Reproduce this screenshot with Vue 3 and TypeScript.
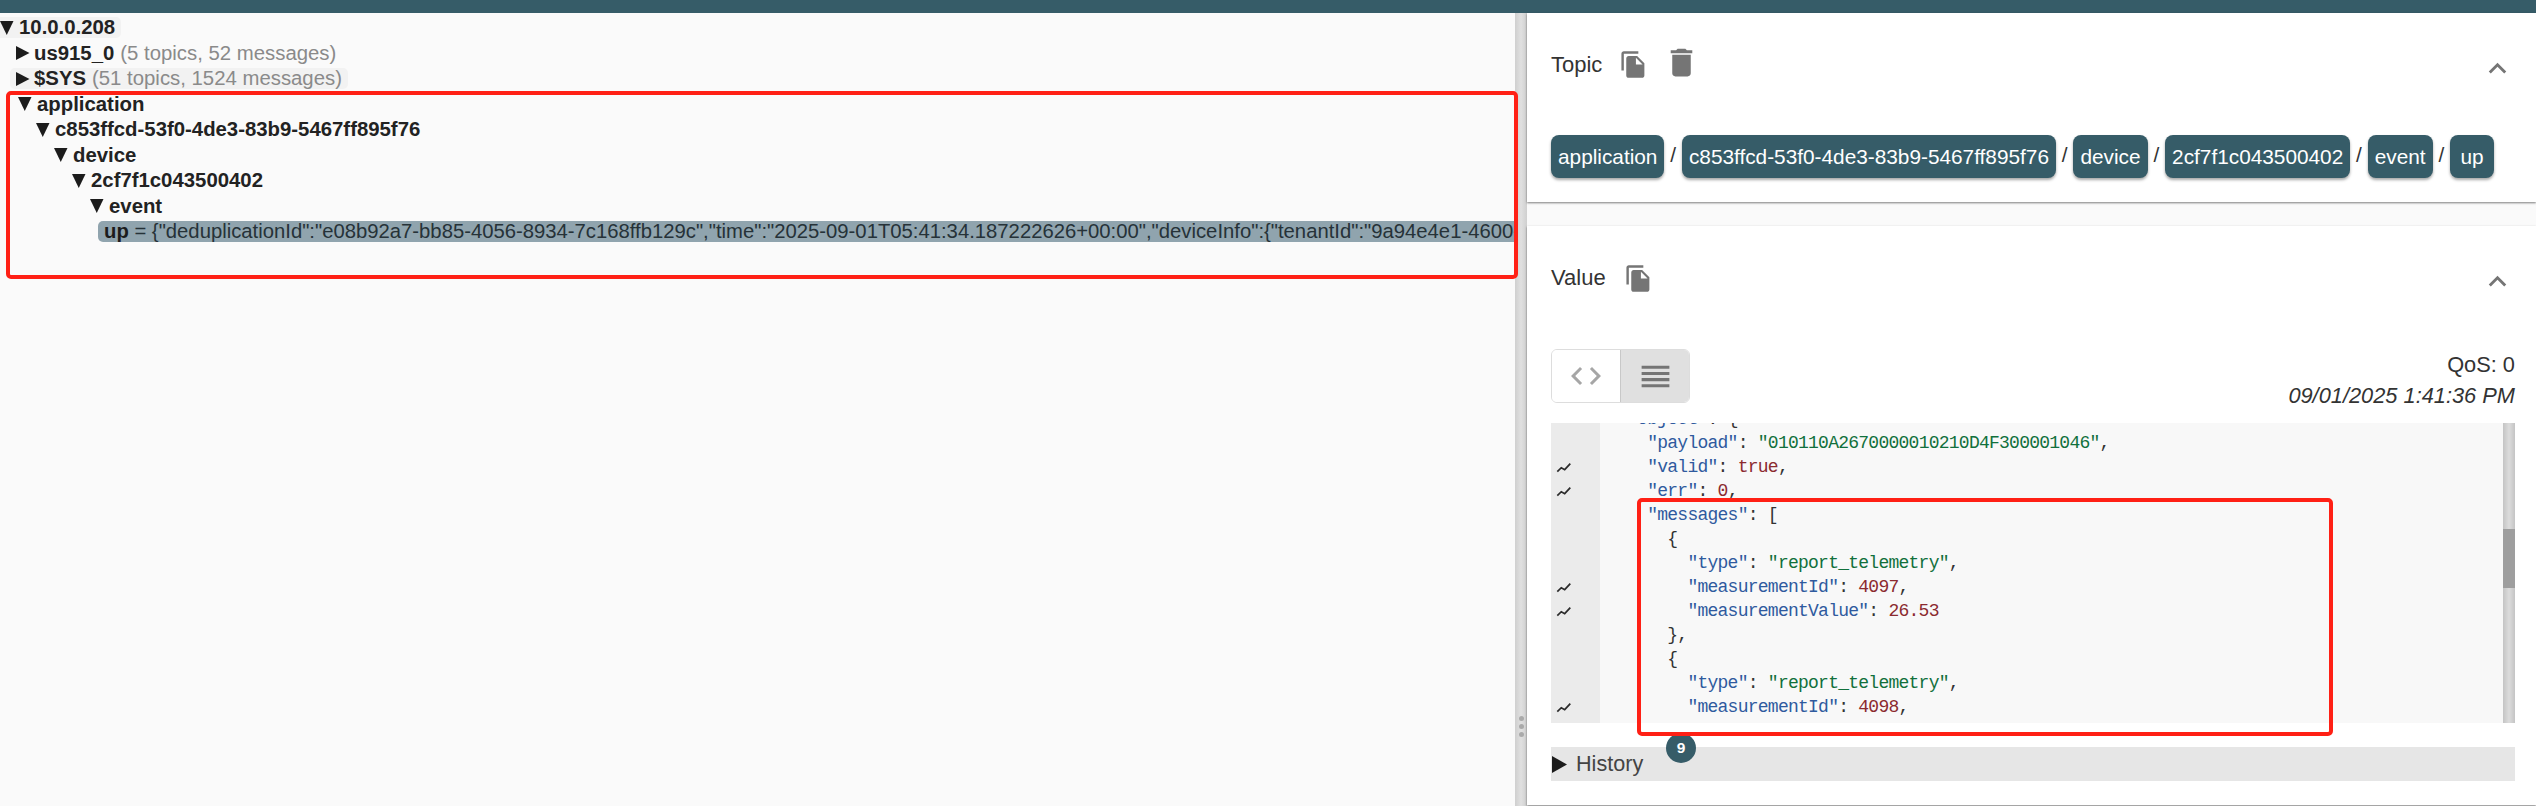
<script setup lang="ts">
type Tok = [string, string]
interface CodeLine { trend: boolean; toks: Tok[] }
interface TreeNode { name: string; stats?: string; level: number; open: boolean; hover?: boolean }

const nodes: TreeNode[] = [
  { name: '10.0.0.208', level: 0, open: true, hover: true },
  { name: 'us915_0', stats: '(5 topics, 52 messages)', level: 1, open: false },
  { name: '$SYS', stats: '(51 topics, 1524 messages)', level: 1, open: false, hover: true },
  { name: 'application', level: 1, open: true },
  { name: 'c853ffcd-53f0-4de3-83b9-5467ff895f76', level: 2, open: true },
  { name: 'device', level: 3, open: true },
  { name: '2cf7f1c043500402', level: 4, open: true },
  { name: 'event', level: 5, open: true },
]

const payload = '{"deduplicationId":"e08b92a7-bb85-4056-8934-7c168ffb129c","time":"2025-09-01T05:41:34.187222626+00:00","deviceInfo":{"tenantId":"9a94e4e1-4600-4d6f-9a3c-1f6c2b7e8a10","tenantName":"ChirpStack"}}'

const chips = ['application', 'c853ffcd-53f0-4de3-83b9-5467ff895f76', 'device', '2cf7f1c043500402', 'event', 'up']

const lines: CodeLine[] = [
  { trend: false, toks: [['k', '  "object"'], ['p', ': {']] },
  { trend: false, toks: [['k', '    "payload"'], ['p', ': '], ['s', '"010110A2670000010210D4F300001046"'], ['p', ',']] },
  { trend: true, toks: [['k', '    "valid"'], ['p', ': '], ['n', 'true'], ['p', ',']] },
  { trend: true, toks: [['k', '    "err"'], ['p', ': '], ['n', '0'], ['p', ',']] },
  { trend: false, toks: [['k', '    "messages"'], ['p', ': [']] },
  { trend: false, toks: [['p', '      {']] },
  { trend: false, toks: [['k', '        "type"'], ['p', ': '], ['s', '"report_telemetry"'], ['p', ',']] },
  { trend: true, toks: [['k', '        "measurementId"'], ['p', ': '], ['n', '4097'], ['p', ',']] },
  { trend: true, toks: [['k', '        "measurementValue"'], ['p', ': '], ['n', '26.53']] },
  { trend: false, toks: [['p', '      },']] },
  { trend: false, toks: [['p', '      {']] },
  { trend: false, toks: [['k', '        "type"'], ['p', ': '], ['s', '"report_telemetry"'], ['p', ',']] },
  { trend: true, toks: [['k', '        "measurementId"'], ['p', ': '], ['n', '4098'], ['p', ',']] },
  { trend: false, toks: [] },
]

const copyPath = 'M16 1H4c-1.1 0-2 .9-2 2v14h2V3h12V1zm-1 4 6 6v10c0 1.1-.9 2-2 2H7.99C6.89 23 6 22.1 6 21l.01-14c0-1.1.89-2 1.99-2h7zm-1 7h5.5L14 6.5V12z'
const chevronPath = 'M12 8l-6 6 1.41 1.41L12 10.83l4.59 4.58L18 14z'
</script>

<template>
  <div class="app">
    <div class="topbar"></div>
    <div class="main">
      <div class="tree">
        <div v-for="n in nodes" :key="n.name" class="row">
          <span
            class="node"
            :class="{ hover: n.hover, closed: !n.open }"
            :style="{ marginLeft: 18 * n.level - 8 + 'px' }"
          >
            <svg v-if="n.open" class="arrow" viewBox="0 0 14 14"><polygon points="0,0 13.5,0 6.75,14" /></svg>
            <svg v-else class="arrow" viewBox="0 0 14 14"><polygon points="0,0 13.5,7 0,14" /></svg>
            <b>{{ n.name }}</b>
            <span v-if="n.stats" class="stats">{{ n.stats }}</span>
          </span>
        </div>
        <div class="row">
          <div class="leaf"><b>up</b> = {{ payload }}</div>
        </div>
      </div>

      <div class="splitter">
        <i></i><i></i><i></i>
      </div>

      <div class="side">
        <section class="panel topic">
          <header class="head">
            <span class="title">Topic</span>
            <svg class="copy" viewBox="0 0 24 24"><path :d="copyPath" /></svg>
            <svg class="trash" viewBox="0 0 24 24"><path d="M6 19c0 1.1.9 2 2 2h8c1.1 0 2-.9 2-2V7H6v12zM19 4h-3.5l-1-1h-5l-1 1H5v2h14V4z" /></svg>
            <svg class="chev" viewBox="0 0 24 24"><path :d="chevronPath" /></svg>
          </header>
          <div class="chips">
            <template v-for="(c, i) in chips" :key="c">
              <span v-if="i > 0" class="slash">/</span>
              <span class="chip">{{ c }}</span>
            </template>
          </div>
        </section>

        <section class="panel value">
          <header class="head">
            <span class="title">Value</span>
            <svg class="copy copy-value" viewBox="0 0 24 24"><path :d="copyPath" /></svg>
            <svg class="chev" viewBox="0 0 24 24"><path :d="chevronPath" /></svg>
          </header>

          <div class="tools">
            <div class="toggle">
              <button class="tbtn">
                <svg class="code-ic" viewBox="0 0 24 24"><path d="M9.4 16.6L4.8 12l4.6-4.6L8 6l-6 6 6 6 1.4-1.4zm5.2 0l4.6-4.6-4.6-4.6L16 6l6 6-6 6-1.4-1.4z" /></svg>
              </button>
              <button class="tbtn on">
                <svg class="list-ic" viewBox="0 0 24 24"><path d="M3 15h18v-2H3v2zm0 4h18v-2H3v2zm0-8h18V9H3v2zm0-6v2h18V5H3z" /></svg>
              </button>
            </div>
            <div class="meta">
              <div>QoS: 0</div>
              <div class="date">09/01/2025 1:41:36 PM</div>
            </div>
          </div>

          <div class="editor">
            <div class="lines">
              <div v-for="(l, i) in lines" :key="i" class="line">
                <div class="gutter">
                  <svg v-if="l.trend" class="trend" viewBox="0 0 24 24"><path d="M6.3 16.7 10.3 12.7 13.7 14.7 19.3 8.7" /></svg>
                </div>
                <code class="src"><span v-for="(t, j) in l.toks" :key="j" :class="t[0]">{{ t[1] }}</span></code>
              </div>
            </div>
            <div class="scroll"><div class="thumb"></div></div>
          </div>

          <div class="history">
            <svg class="harrow" viewBox="0 0 15 17"><polygon points="0,0 15,8.5 0,17" /></svg>
            <span>History</span>
            <span class="badge">9</span>
          </div>
        </section>
      </div>
    </div>

    <div class="mark mark-tree"></div>
    <div class="mark mark-code"></div>
  </div>
</template>

<style>
html, body { margin: 0; overflow: hidden; }
</style>

<style scoped>
.app {
  position: relative;
  width: 2536px;
  height: 806px;
  overflow: hidden;
  display: flex;
  flex-direction: column;
  font-family: "Liberation Sans", Arial, sans-serif;
  color: #333;
  background: #fafafa;
}
.topbar { height: 13px; flex: none; background: #365c68; }
.main { flex: 1; display: flex; min-height: 0; }

.tree {
  width: 1515px;
  flex: none;
  padding-top: 2px;
  overflow: hidden;
  background: #fafafa;
  font-size: 20.35px;
  color: #222;
}
.row { height: 25.5px; display: flex; align-items: center; white-space: nowrap; }
.node {
  display: inline-flex;
  align-items: center;
  height: 21px;
  padding: 0 6px 0 8px;
  border-radius: 5px;
}
.node.hover { background: #f2f2f2; }
.arrow { width: 14px; height: 14px; flex: none; margin-right: 5px; fill: #1c1c1c; }
.node.closed { margin-right: 0; }
.node.closed .arrow { margin-left: -2px; margin-right: 4px; }
.stats { margin-left: 6px; color: #8a8a8a; }
.leaf {
  margin-left: 98px;
  flex: 1;
  min-width: 0;
  height: 21px;
  line-height: 21px;
  padding-left: 6px;
  overflow: hidden;
  background: #90a4ae;
  border-radius: 5px 0 0 5px;
  color: #263238;
  font-size: 20.28px;
}
.leaf b { color: #1c1c1c; }

.splitter {
  width: 12px;
  flex: none;
  box-sizing: border-box;
  display: flex;
  flex-direction: column;
  align-items: center;
  justify-content: flex-end;
  gap: 3px;
  padding-bottom: 69px;
  background: linear-gradient(90deg, #cfcfcf, #e0e0e0 50%, #cfcfcf);
}
.splitter i { width: 5px; height: 5px; border-radius: 50%; background: #aaa; }

.side { flex: 1; display: flex; flex-direction: column; min-width: 0; gap: 24px; background: #fafafa; }
.panel {
  background: #fff;
  padding: 0 21px 0 24px;
  box-shadow: 0 1px 2px rgba(0, 0, 0, 0.5);
}
.topic { height: 189px; flex: none; box-sizing: border-box; }
.value { height: 579px; flex: none; box-sizing: border-box; }

.head { height: 104px; display: flex; align-items: center; }
.title { font-size: 22px; color: #333; }
.head svg { flex: none; fill: #757575; }
.copy { width: 29px; height: 29px; margin-left: 16.5px; margin-top: -2px; }
.copy-value { margin-left: 18px; margin-top: 0; }
.trash { width: 37px; height: 37px; margin-left: 15px; margin-top: -6px; }
.chev { width: 35px; height: 35px; margin-left: auto; margin-top: 6px; margin-right: 0; }

.chips { display: flex; align-items: center; margin-top: 18px; font-size: 20.8px; }
.chip {
  height: 43px;
  min-width: 30px;
  line-height: 43px;
  padding: 0 7px;
  border-radius: 8px;
  background: #365c68;
  color: #fff;
  text-align: center;
  white-space: nowrap;
  box-shadow: 0 2px 3px rgba(0, 0, 0, 0.35);
}
.slash { width: 17.5px; text-align: center; color: #333; margin-top: -4px; }

.tools { height: 54px; margin-top: 19px; display: flex; justify-content: space-between; }
.toggle {
  width: 139px;
  display: flex;
  box-sizing: border-box;
  border: 1px solid #ddd;
  border-radius: 6px;
  overflow: hidden;
}
.tbtn {
  flex: 1;
  padding: 0;
  margin: 0;
  border: 0;
  background: #fff;
  display: flex;
  align-items: center;
  justify-content: center;
}
.tbtn.on { background: #e0e0e0; border-left: 1px solid #c8c8c8; }
.code-ic { width: 36px; height: 36px; fill: #a6a6a6; }
.list-ic { width: 37px; height: 37px; fill: #757575; }
.meta { text-align: right; font-size: 21.8px; line-height: 31px; color: #333; }
.date { font-style: italic; }

.editor { height: 300px; margin-top: 20px; display: flex; background: #f8f8f8; overflow: hidden; }
.lines { flex: 1; min-width: 0; margin-top: -16px; }
.line { height: 24px; display: flex; }
.gutter { width: 49px; flex: none; background: #ebebeb; }
.trend { display: block; width: 24px; height: 24px; fill: none; stroke: #2b2b2b; stroke-width: 1.7; }
.src {
  padding-left: 7px;
  font-family: "Liberation Mono", monospace;
  font-size: 18px;
  letter-spacing: -0.75px;
  line-height: 24px;
  white-space: pre;
}
.k { color: #2f5a9e; }
.s { color: #11703c; }
.n { color: #8b2a2f; }
.p { color: #333; }
.scroll {
  width: 12px;
  flex: none;
  padding-top: 106px;
  box-sizing: border-box;
  background: linear-gradient(90deg, #c4c4c4, #dcdcdc 50%, #c4c4c4);
}
.thumb { height: 59px; background: #9e9e9e; }

.history {
  position: relative;
  height: 34px;
  margin-top: 24px;
  display: flex;
  align-items: center;
  background: #e6e6e6;
  font-size: 21.6px;
  color: #444;
}
.harrow { width: 15px; height: 17px; margin: 0 9px 0 1px; fill: #1c1c1c; }
.badge {
  position: absolute;
  left: 115px;
  top: -14px;
  width: 30px;
  height: 30px;
  border-radius: 50%;
  background: #365c68;
  color: #fff;
  font-size: 15.5px;
  font-weight: bold;
  line-height: 30px;
  text-align: center;
}

.mark {
  position: absolute;
  box-sizing: border-box;
  border: 4px solid #ff2015;
  border-radius: 5px;
  pointer-events: none;
}
.mark-tree { left: 6px; top: 91px; width: 1512px; height: 188px; }
.mark-code { left: 1637px; top: 498px; width: 696px; height: 238px; }
</style>
